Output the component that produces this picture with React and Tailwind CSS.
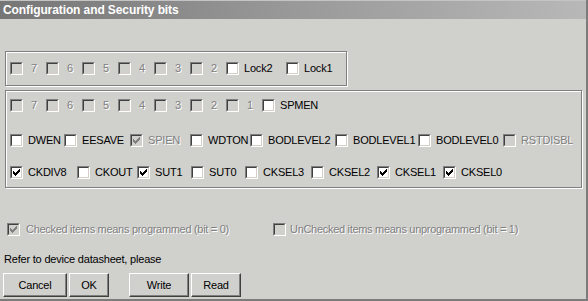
import React from 'react';

const CHECK_COLS = [2, 3, 4, 3, 2, 1, 0];

const Check = ({ color }) => (
  <svg width="7" height="7" viewBox="0 0 7 7" shapeRendering="crispEdges">
    {CHECK_COLS.map((y, x) => (
      <rect key={x} x={x} y={y} width="1" height="3" fill={color} />
    ))}
  </svg>
);

const Box = ({ checked, disabled }) => (
  <span className="w-[13px] h-[13px] shrink-0 flex border border-t-[#808080] border-l-[#808080] border-b-white border-r-white">
    <span
      className={
        'flex-1 flex items-center justify-center border border-t-[#404040] border-l-[#404040] border-b-[#d4d0c8] border-r-[#d4d0c8] ' +
        (disabled ? 'bg-[#d0d0cd]' : 'bg-white')
      }
    >
      {checked && <Check color={disabled ? '#808080' : '#000'} />}
    </span>
  </span>
);

const Item = ({ label, w, checked, disabled, digit }) => (
  <div className={'flex items-center h-[13px] overflow-hidden whitespace-nowrap shrink-0 ' + w}>
    <Box checked={checked} disabled={disabled} />
    <span
      className={
        'leading-[13px] ' +
        (digit ? 'ml-[8px] ' : 'ml-[5px] ') +
        (disabled ? 'text-[#808080] [text-shadow:1px_1px_0_#fff]' : 'text-black')
      }
    >
      {label}
    </span>
  </div>
);

const digits = (list) =>
  list.map((d) => <Item key={d} label={d} w="w-[36px]" disabled digit />);

const Button = ({ children, w }) => (
  <button
    className={
      'h-[24px] flex items-center justify-center text-black border border-t-white border-l-white border-r-[#404040] border-b-[#404040] shadow-[inset_-1px_-1px_0_#808080] bg-[#d0d0cd] ' +
      w
    }
  >
    {children}
  </button>
);

export default function App() {
  return (
    <div className="w-[588px] h-[301px] bg-[#d0d0cd] flex flex-col border-r-2 border-b-2 border-[#7c7c7c] overflow-hidden font-['Liberation_Sans',Arial,sans-serif] text-[11px] tracking-[-0.2px] text-black">
      <div className="h-[1px] bg-[#c4c4c4]" />
      <div className="h-[18px] flex items-center pl-[3px] bg-gradient-to-r from-[#767676] via-[#999999] to-[#b8b8b8] text-white font-bold text-[12px] tracking-[-0.1px]">
        Configuration and Security bits
      </div>

      {/* Lock bits */}
      <div className="mt-[32px] ml-[5px] w-[342px] h-[35px] border border-[#808080] shadow-[inset_1px_1px_0_#fff,1px_1px_0_#fff] flex pl-[4px] pt-[10px]">
        {digits(['7', '6', '5', '4', '3', '2'])}
        <Item label="Lock2" w="w-[60px]" />
        <Item label="Lock1" w="w-[50px]" />
      </div>

      {/* Fuse bits */}
      <div className="mt-[4px] ml-[5px] w-[577px] h-[98px] border border-[#808080] shadow-[inset_1px_1px_0_#fff,1px_1px_0_#fff] flex flex-col pl-[4px] pt-[8px]">
        <div className="flex">
          {digits(['7', '6', '5', '4', '3', '2', '1'])}
          <Item label="SPMEN" w="w-[60px]" />
        </div>
        <div className="flex mt-[22px]">
          <Item label="DWEN" w="w-[54px]" />
          <Item label="EESAVE" w="w-[66px]" />
          <Item label="SPIEN" w="w-[60px]" checked disabled />
          <Item label="WDTON" w="w-[60px]" />
          <Item label="BODLEVEL2" w="w-[85px]" />
          <Item label="BODLEVEL1" w="w-[83px]" />
          <Item label="BODLEVEL0" w="w-[85px]" />
          <Item label="RSTDISBL" w="w-[70px]" disabled />
        </div>
        <div className="flex mt-[19px]">
          <Item label="CKDIV8" w="w-[67px]" checked />
          <Item label="CKOUT" w="w-[60px]" />
          <Item label="SUT1" w="w-[54px]" checked />
          <Item label="SUT0" w="w-[54px]" />
          <Item label="CKSEL3" w="w-[66px]" />
          <Item label="CKSEL2" w="w-[66px]" />
          <Item label="CKSEL1" w="w-[66px]" checked />
          <Item label="CKSEL0" w="w-[60px]" checked />
        </div>
      </div>

      {/* Legend */}
      <div className="mt-[35px] flex pl-[7px] tracking-[-0.3px]">
        <div className="w-[266px] flex items-center h-[13px] whitespace-nowrap">
          <Box checked disabled />
          <span className="ml-[6px] text-[#808080] [text-shadow:1px_1px_0_#fff]">
            Checked items means programmed (bit = 0)
          </span>
        </div>
        <div className="flex items-center h-[13px] whitespace-nowrap">
          <Box disabled />
          <span className="ml-[4px] text-[#808080] [text-shadow:1px_1px_0_#fff]">
            UnChecked items means unprogrammed (bit = 1)
          </span>
        </div>
      </div>

      <div className="mt-[16px] pl-[4px] h-[14px] leading-[14px]">Refer to device datasheet, please</div>

      <div className="mt-[7px] pl-[3px] flex">
        <Button w="w-[64px]">Cancel</Button>
        <Button w="w-[40px] ml-[2px]">OK</Button>
        <Button w="w-[60px] ml-[20px]">Write</Button>
        <Button w="w-[50px] ml-[2px]">Read</Button>
      </div>
    </div>
  );
}
